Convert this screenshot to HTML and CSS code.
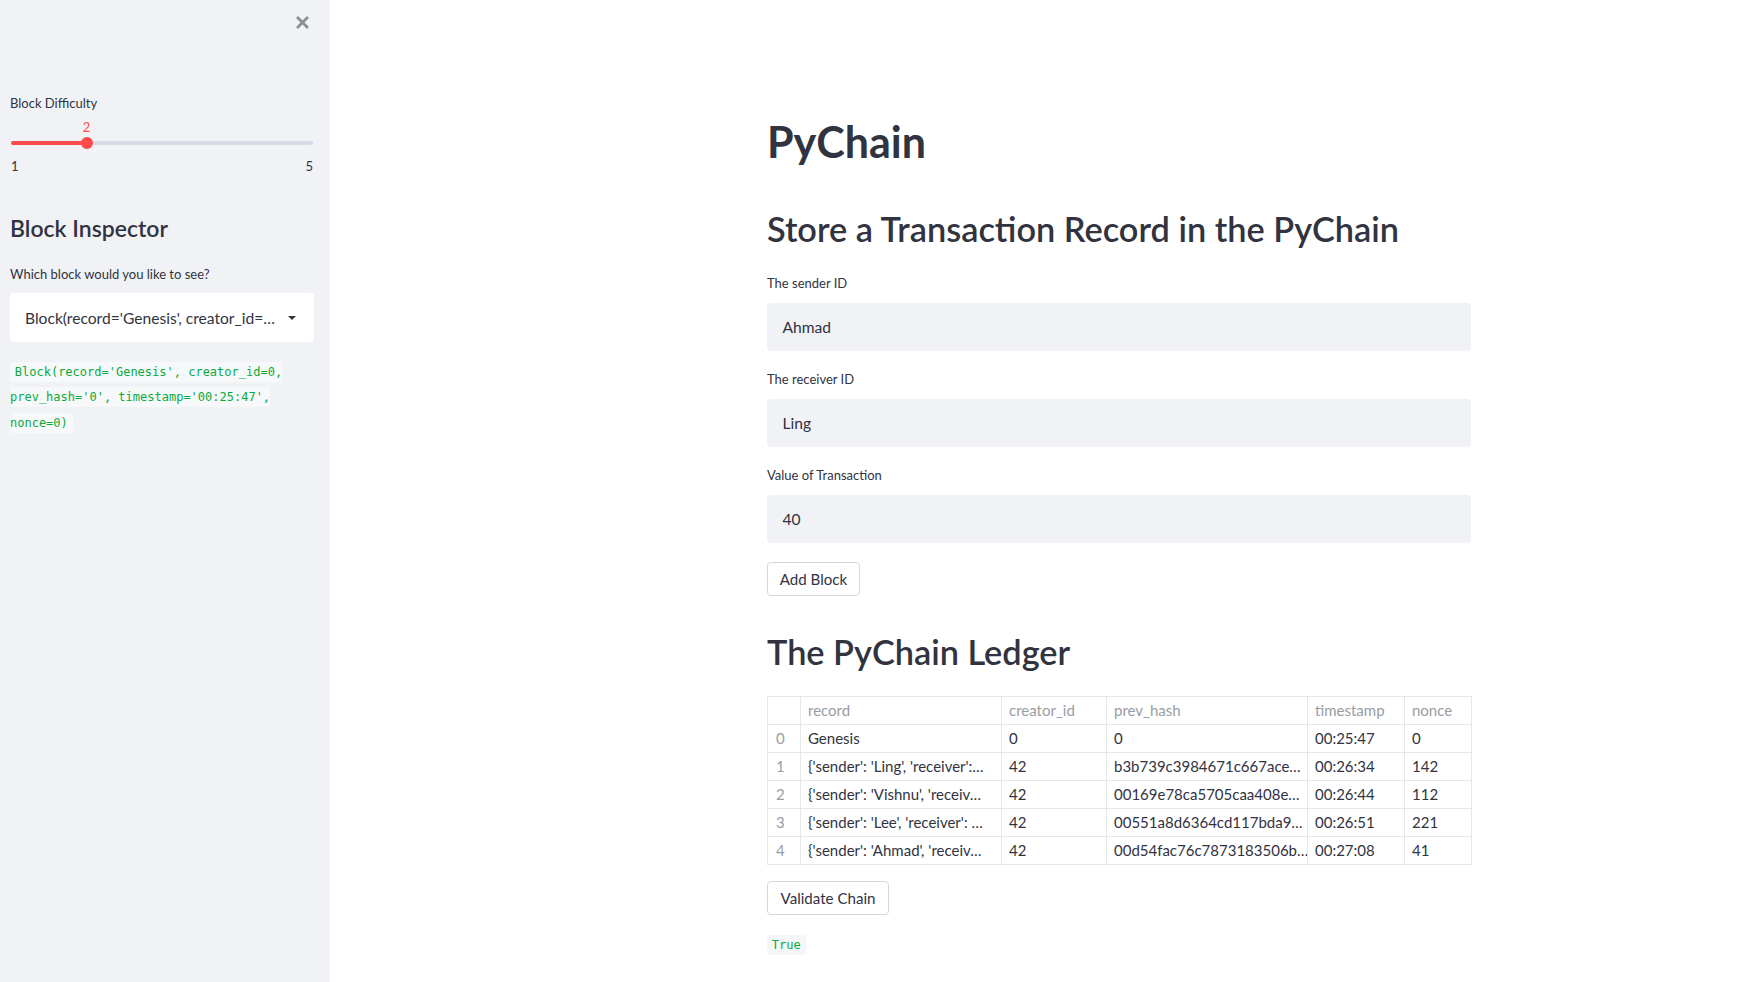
FILE: index.html
```html
<!DOCTYPE html>
<html lang="en">
<head>
<meta charset="utf-8">
<title>PyChain</title>
<link rel="stylesheet" href="styles.css">
</head>
<body>
<div class="app">
  <aside class="sidebar">
    <div class="close-row">
      <svg class="close" width="13" height="13" viewBox="0 0 13 13" aria-hidden="true">
        <path d="M2 2 L11 11 M11 2 L2 11" stroke="#8d8f98" stroke-width="2.8" stroke-linecap="square" fill="none"/>
      </svg>
    </div>

    <div class="sb-label first">Block Difficulty</div>
    <div class="slider">
      <div class="slider-value-row"><span class="slider-value" style="left:25%">2</span></div>
      <div class="track"><div class="fill" style="width:25%"></div><div class="thumb" style="left:25%"></div></div>
      <div class="ticks"><span>1</span><span>5</span></div>
    </div>

    <h2 class="sb-heading">Block Inspector</h2>
    <div class="sb-label q">Which block would you like to see?</div>
    <div class="select">
      <span class="select-text">Block(record='Genesis', creator_id=…</span>
      <svg class="caret" width="8" height="4" viewBox="0 0 8 4" aria-hidden="true"><path d="M0 0 H8 L4 4 Z" fill="#31333f"/></svg>
    </div>
    <p class="code-para"><code>Block(record='Genesis', creator_id=0, prev_hash='0', timestamp='00:25:47', nonce=0)</code></p>
  </aside>

  <main class="main">
    <div class="block">
      <h1 class="title">PyChain</h1>
      <h2 class="h2 store">Store a Transaction Record in the PyChain</h2>

      <div class="field first-field">
        <div class="label">The sender ID</div>
        <div class="input">Ahmad</div>
      </div>
      <div class="field">
        <div class="label">The receiver ID</div>
        <div class="input">Ling</div>
      </div>
      <div class="field">
        <div class="label">Value of Transaction</div>
        <div class="input">40</div>
      </div>

      <button class="btn add">Add Block</button>

      <h2 class="h2 ledger">The PyChain Ledger</h2>

      <table class="df">
        <colgroup>
          <col style="width:33px"><col style="width:201px"><col style="width:105px"><col style="width:201px"><col style="width:97px"><col style="width:67px">
        </colgroup>
        <thead>
          <tr><th></th><th>record</th><th>creator_id</th><th>prev_hash</th><th>timestamp</th><th>nonce</th></tr>
        </thead>
        <tbody>
          <tr><td class="idx">0</td><td>Genesis</td><td>0</td><td>0</td><td>00:25:47</td><td>0</td></tr>
          <tr><td class="idx">1</td><td>{'sender': 'Ling', 'receiver':…</td><td>42</td><td>b3b739c3984671c667ace…</td><td>00:26:34</td><td>142</td></tr>
          <tr><td class="idx">2</td><td>{'sender': 'Vishnu', 'receiv…</td><td>42</td><td>00169e78ca5705caa408e…</td><td>00:26:44</td><td>112</td></tr>
          <tr><td class="idx">3</td><td>{'sender': 'Lee', 'receiver': …</td><td>42</td><td>00551a8d6364cd117bda9…</td><td>00:26:51</td><td>221</td></tr>
          <tr><td class="idx">4</td><td>{'sender': 'Ahmad', 'receiv…</td><td>42</td><td>00d54fac76c7873183506b…</td><td>00:27:08</td><td>41</td></tr>
        </tbody>
      </table>

      <button class="btn validate">Validate Chain</button>
      <p class="code-para result"><code>True</code></p>
    </div>
  </main>
</div>
</body>
</html>
```
FILE: styles.css
```css
* { box-sizing: border-box; }

html, body {
  margin: 0;
  padding: 0;
  height: 100%;
  background: #ffffff;
  color: #31333f;
  font-family: "Lato", "Liberation Sans", sans-serif;
  overflow: hidden;
}

.app {
  display: flex;
  height: 100vh;
}

/* ---------- sidebar ---------- */
.sidebar {
  width: 330px;
  flex: 0 0 330px;
  background: #f0f2f6;
  padding: 0 16px 0 10px;
  display: flex;
  flex-direction: column;
}

.close-row {
  display: flex;
  justify-content: flex-end;
  padding: 16px 5px 0 0;
  height: 29.5px;
}
.close { display: block; }

.sb-label {
  font-size: 13px;
  line-height: 16px;
  height: 16px;
  white-space: nowrap;
}
.sb-label.first { margin-top: 65.5px; }
.sb-label.q { margin-top: 24px; }

.slider {
  display: flex;
  flex-direction: column;
  margin: 8px 1px 0 1px;
}
.slider-value-row {
  position: relative;
  height: 16px;
}
.slider-value {
  position: absolute;
  top: 0;
  transform: translateX(-50%);
  color: #ff4b4b;
  font-size: 13px;
  line-height: 16px;
}
.track {
  position: relative;
  margin-top: 6px;
  height: 4px;
  border-radius: 2px;
  background: #d6dbe5;
}
.fill {
  height: 4px;
  border-radius: 2px;
  background: #ff4b4b;
}
.thumb {
  position: absolute;
  top: -4px;
  width: 12px;
  height: 12px;
  margin-left: -6px;
  border-radius: 50%;
  background: #ff4b4b;
}
.ticks {
  display: flex;
  justify-content: space-between;
  margin-top: 13px;
  height: 16px;
  font-size: 13px;
  line-height: 16px;
}

.sb-heading {
  margin: 40px 0 0 0;
  font-size: 23px;
  font-weight: 600;
  line-height: 28px;
  height: 28px;
  letter-spacing: 0;
}

.select {
  margin-top: 11px;
  height: 49px;
  background: #ffffff;
  border-radius: 4px;
  display: flex;
  align-items: center;
  justify-content: space-between;
  padding: 0 18px 0 15px;
  font-size: 15.6px;
}
.select-text { white-space: nowrap; }
.caret { display: block; flex: 0 0 auto; }

.code-para {
  margin: 14.8px 0 0 0;
  font-size: 16px;
  line-height: 1.6;
}
.code-para code {
  font-family: "DejaVu Sans Mono", "Liberation Mono", monospace;
  font-size: 12px;
  line-height: 1;
  color: #09ab3b;
  background: #f7f8fa;
  padding: 3px 4.8px;
  border-radius: 4px;
}

/* ---------- main ---------- */
.main {
  flex: 1 1 auto;
  padding-left: 437px;
}
.block {
  width: 704px;
  display: flex;
  flex-direction: column;
  align-items: flex-start;
}

.title {
  margin: 116px 0 0 0;
  font-size: 43px;
  font-weight: 700;
  line-height: 52px;
  height: 52px;
}

.h2 {
  margin: 0;
  font-size: 34.3px;
  font-weight: 600;
  line-height: 41px;
  height: 41px;
  white-space: nowrap;
}
.h2.store { margin-top: 40px; }
.h2.ledger { margin-top: 35px; }

.field {
  width: 100%;
  display: flex;
  flex-direction: column;
  gap: 12.5px;
  margin-top: 19.5px;
}
.field.first-field { margin-top: 25.5px; }

.label {
  font-size: 13px;
  line-height: 16px;
  height: 16px;
}

.input {
  height: 48px;
  background: #f0f2f6;
  border-radius: 4px;
  display: flex;
  align-items: center;
  padding-left: 15.5px;
  font-size: 15.6px;
}

.btn {
  font-family: inherit;
  font-size: 15.1px;
  color: #31333f;
  background: #ffffff;
  border: 1px solid #d5d6d9;
  border-radius: 4px;
  height: 34px;
  padding: 0;
  white-space: nowrap;
  text-align: center;
  cursor: pointer;
}
.btn.add { margin-top: 18.5px; width: 93px; }
.btn.validate { margin-top: 16.5px; width: 122px; }

.df {
  margin-top: 24px;
  width: 704px;
  table-layout: fixed;
  border-collapse: collapse;
  font-size: 15px;
  border: 1px solid #e6e7eb;
}
.df th, .df td {
  height: 28px;
  padding: 0 3px 0 7px;
  border: 1px solid #e6e7eb;
  text-align: left;
  white-space: nowrap;
  overflow: hidden;
  font-weight: 400;
}
.df th { color: #9a9ca4; }
.df td.idx { color: #9a9ca4; padding-left: 8px; }

.code-para.result { margin-top: 15px; }
.code-para.result code { background: #f5f6f8; }
```
